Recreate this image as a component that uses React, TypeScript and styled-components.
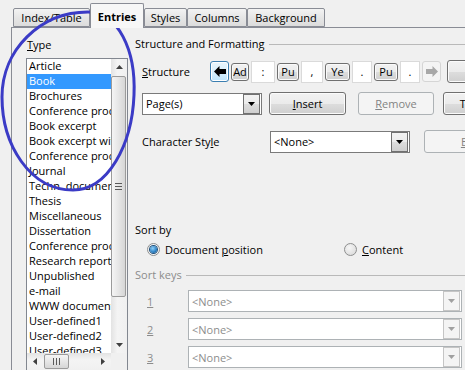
import styled, { createGlobalStyle } from 'styled-components'

const GlobalStyle = createGlobalStyle`
  body {
    margin: 0;
    background: #f0f0f0;
    font-family: "Open Sans", "Liberation Sans", Arial, sans-serif;
    font-size: 11px;
    color: #000;
  }
`

const Window = styled.div`
  position: relative;
  width: 465px;
  height: 370px;
  overflow: hidden;
  background: #f0f0f0;
  line-height: 15px;
`

const TabStrip = styled.div`
  display: flex;
  align-items: flex-end;
  height: 27px;
  padding-left: 13px;
  box-sizing: border-box;
`

const Tab = styled.div<{ $w: number; $active?: boolean }>`
  position: relative;
  z-index: ${p => (p.$active ? 1 : 0)};
  width: ${p => p.$w}px;
  height: ${p => (p.$active ? 25 : 19)}px;
  margin-bottom: ${p => (p.$active ? -1 : 0)}px;
  box-sizing: border-box;
  border: 1px solid #898c95;
  border-bottom: ${p => (p.$active ? 'none' : '1px solid #898c95')};
  border-radius: 2px 2px 0 0;
  background: ${p =>
    p.$active ? '#f7f7f7' : 'linear-gradient(#f3f3f3, #e6e6e6 50%, #dcdcdc)'};
  font-weight: ${p => (p.$active ? 700 : 400)};
  display: flex;
  align-items: center;
  justify-content: center;
  padding-top: ${p => (p.$active ? 1 : 0)}px;
`

const TabPage = styled.div`
  display: flex;
  margin-left: 11px;
  height: 343px;
  border-left: 1px solid #898c95;
  border-top: 1px solid #898c95;
`

const LeftPane = styled.div`
  width: 123px;
  flex-shrink: 0;
  padding-left: 14px;
  box-sizing: border-box;
  display: flex;
  flex-direction: column;
`

const Label = styled.div<{ $muted?: boolean }>`
  color: ${p => (p.$muted ? '#8c8c8c' : '#000')};
  white-space: nowrap;
`

const TypeLabel = styled(Label)`
  margin: 9px 0 6px 1px;
`

const Key = styled.span`
  text-decoration: underline;
`

const ListBox = styled.div`
  width: 102px;
  height: 314px;
  box-sizing: border-box;
  border: 1px solid #828790;
  background: #fff;
  display: grid;
  grid-template-columns: 84px 16px;
  grid-template-rows: 294px 17px;
  overflow: hidden;
`

const Items = styled.div`
  overflow: hidden;
`

const Item = styled.div<{ $selected?: boolean }>`
  height: 15px;
  line-height: 13px;
  padding-left: 2px;
  white-space: nowrap;
  background: ${p => (p.$selected ? '#3399ff' : 'transparent')};
  color: ${p => (p.$selected ? '#fff' : '#000')};
`

const VScroll = styled.div`
  display: flex;
  flex-direction: column;
  background: linear-gradient(90deg, #e3e3e3, #f4f4f4 40%, #f0f0f0);
`

const HScroll = styled.div`
  display: flex;
  align-items: center;
  background: linear-gradient(#e3e3e3, #f4f4f4 40%, #f0f0f0);
`

const ScrollArrow = styled.div<{ $size: number }>`
  flex-shrink: 0;
  width: ${p => p.$size}px;
  height: ${p => p.$size}px;
  display: flex;
  align-items: center;
  justify-content: center;
`

const VThumb = styled.div`
  margin: 1px 0 0 0;
  height: 221px;
  width: 15px;
  box-sizing: border-box;
  border: 1px solid #9b9b9b;
  border-radius: 2px;
  background: linear-gradient(90deg, #f5f5f5, #e6e6e6 50%, #d6d6d6);
  display: flex;
  align-items: center;
  justify-content: center;
`

const HThumb = styled.div`
  margin-left: 1px;
  width: 25px;
  height: 15px;
  box-sizing: border-box;
  border: 1px solid #9b9b9b;
  border-radius: 2px;
  background: linear-gradient(#f5f5f5, #e6e6e6 50%, #d6d6d6);
  display: flex;
  align-items: center;
  justify-content: center;
`

const Track = styled.div`
  flex: 1;
`

const Corner = styled.div`
  background: #f0f0f0;
`

const RightPane = styled.div`
  width: 340px;
  flex-shrink: 0;
  display: flex;
  flex-direction: column;
`

const Section = styled.div<{ $top: number; $muted?: boolean }>`
  display: flex;
  align-items: center;
  gap: 4px;
  margin-top: ${p => p.$top}px;
  color: ${p => (p.$muted ? '#8c8c8c' : '#000')};
  white-space: nowrap;
`

const Rule = styled.div`
  flex: 1;
  height: 1px;
  background: #b9b9b9;
  margin-top: 1px;
`

const Row = styled.div<{ $top: number; $indent: number }>`
  display: flex;
  align-items: center;
  margin-top: ${p => p.$top}px;
  padding-left: ${p => p.$indent}px;
  white-space: nowrap;
`

const RowLabel = styled.div<{ $w: number; $muted?: boolean }>`
  width: ${p => p.$w}px;
  flex-shrink: 0;
  color: ${p => (p.$muted ? '#8c8c8c' : '#000')};
`

const Strip = styled.div`
  display: flex;
  align-items: center;
  gap: 2px;
  height: 22px;
`

const NavButton = styled.div<{ $focused?: boolean }>`
  width: 19px;
  height: 21px;
  box-sizing: border-box;
  border: 1px solid ${p => (p.$focused ? '#3c7fb1' : '#d5d5d5')};
  border-radius: 3px;
  background: ${p => (p.$focused ? 'linear-gradient(#eaf6fd, #d9f0fc 50%, #bee6fd)' : '#f4f4f4')};
  box-shadow: ${p => (p.$focused ? 'inset 0 0 0 1px #ffffff' : 'none')};
  display: flex;
  align-items: center;
  justify-content: center;
`

const Token = styled.div<{ $w: number }>`
  width: ${p => p.$w}px;
  height: 18px;
  box-sizing: border-box;
  border: 1px solid #707070;
  border-radius: 3px;
  box-shadow: inset 0 0 0 1px #fafafa;
  background: linear-gradient(#f2f2f2, #ebebeb 50%, #dddddd 51%, #cfcfcf);
  display: flex;
  align-items: center;
  justify-content: center;
`

const TextCell = styled.div<{ $w: number }>`
  width: ${p => p.$w}px;
  height: 22px;
  box-sizing: border-box;
  border: 1px solid #dadada;
  background: #fff;
  display: flex;
  align-items: center;
  justify-content: center;
`

const Button = styled.div<{ $w: number; $left: number; $disabled?: boolean }>`
  width: ${p => p.$w}px;
  height: 23px;
  margin-left: ${p => p.$left}px;
  flex-shrink: 0;
  box-sizing: border-box;
  border: 1px solid ${p => (p.$disabled ? '#adb2b5' : '#707070')};
  border-radius: 3px;
  box-shadow: inset 0 0 0 1px ${p => (p.$disabled ? '#f4f4f4' : '#fbfbfb')};
  background: ${p =>
    p.$disabled ? '#f4f4f4' : 'linear-gradient(#f2f2f2, #ebebeb 50%, #dddddd 51%, #cfcfcf)'};
  color: ${p => (p.$disabled ? '#838383' : '#000')};
  display: flex;
  align-items: center;
  justify-content: center;
`

const Combo = styled.div<{ $w: number; $disabled?: boolean }>`
  width: ${p => p.$w}px;
  height: 22px;
  flex-shrink: 0;
  box-sizing: border-box;
  border: 1px solid ${p => (p.$disabled ? '#adb2b5' : '#7a7a7a')};
  background: #fff;
  display: flex;
  align-items: stretch;
  color: ${p => (p.$disabled ? '#8d8d8d' : '#000')};
`

const ComboText = styled.div`
  flex: 1;
  padding-left: 3px;
  display: flex;
  align-items: center;
`

const ComboButton = styled.div<{ $disabled?: boolean }>`
  width: 17px;
  margin: 0 1px 0 0;
  box-sizing: border-box;
  border: 1px solid ${p => (p.$disabled ? '#c5c5c5' : '#707070')};
  background: ${p => (p.$disabled ? '#f4f4f4' : 'linear-gradient(#f2f2f2, #ebebeb 50%, #dddddd 51%, #cfcfcf)')};
  display: flex;
  align-items: center;
  justify-content: center;
`

const RadioOption = styled.div<{ $w: number }>`
  width: ${p => p.$w}px;
  display: flex;
  align-items: center;
  gap: 5px;
`

const RadioDot = styled.div<{ $checked?: boolean }>`
  width: 13px;
  height: 13px;
  box-sizing: border-box;
  border-radius: 50%;
  border: 1px solid #8e8f8f;
  background: ${p => (p.$checked ? '#f4f4f4' : 'radial-gradient(circle at 40% 35%, #f6f6f6, #d6d6d6)')};
  display: flex;
  align-items: center;
  justify-content: center;
  &::after {
    content: '';
    display: ${p => (p.$checked ? 'block' : 'none')};
    width: 7px;
    height: 7px;
    border-radius: 50%;
    background: radial-gradient(circle at 40% 35%, #8fd0f8, #2a7fc3 60%, #134a7a);
    box-shadow: 0 0 0 1px #1f4f7a;
  }
`

const Annotation = styled.svg`
  position: absolute;
  left: 0;
  top: 0;
  pointer-events: none;
`

const Tri = ({ dir, color = '#404040' }: { dir: 'up' | 'down' | 'left' | 'right'; color?: string }) => {
  const d = {
    up: 'M0 4 L3.5 0 L7 4 Z',
    down: 'M0 0 L7 0 L3.5 4 Z',
    left: 'M4 0 L4 7 L0 3.5 Z',
    right: 'M0 0 L4 3.5 L0 7 Z',
  }[dir]
  const vertical = dir === 'up' || dir === 'down'
  return (
    <svg width={vertical ? 7 : 4} height={vertical ? 4 : 7} viewBox={vertical ? '0 0 7 4' : '0 0 4 7'}>
      <path d={d} fill={color} />
    </svg>
  )
}

const BigArrow = ({ right, color }: { right?: boolean; color: string }) => (
  <svg width="12" height="11" viewBox="0 0 12 11">
    <path
      d="M0 5.5 L5.5 0 L5.5 3 L12 3 L12 8 L5.5 8 L5.5 11 Z"
      fill={color}
      transform={right ? 'translate(12 0) scale(-1 1)' : undefined}
    />
  </svg>
)

const Grip = ({ vertical }: { vertical?: boolean }) => (
  <svg width="7" height="7" viewBox="0 0 7 7">
    {[0, 3, 6].map(o =>
      vertical ? (
        <rect key={o} x="0" y={o} width="7" height="1" fill="#5a5a5a" />
      ) : (
        <rect key={o} x={o} y="0" width="1" height="7" fill="#5a5a5a" />
      ),
    )}
  </svg>
)

const types = [
  'Article',
  'Book',
  'Brochures',
  'Conference proceedings',
  'Book excerpt',
  'Book excerpt with title',
  'Conference proceedings',
  'Journal',
  'Techn. documentation',
  'Thesis',
  'Miscellaneous',
  'Dissertation',
  'Conference proceedings',
  'Research report',
  'Unpublished',
  'e-mail',
  'WWW document',
  'User-defined1',
  'User-defined2',
  'User-defined3',
  'User-defined4',
]

const tabs = [
  { label: 'Index/Table', w: 77 },
  { label: 'Entries', w: 54, active: true },
  { label: 'Styles', w: 43 },
  { label: 'Columns', w: 60 },
  { label: 'Background', w: 78 },
]

export default function App() {
  return (
    <Window>
      <GlobalStyle />
      <TabStrip>
        {tabs.map(t => (
          <Tab key={t.label} $w={t.w} $active={t.active}>
            {t.label}
          </Tab>
        ))}
      </TabStrip>
      <TabPage>
        <LeftPane>
          <TypeLabel>
            <Key>T</Key>ype
          </TypeLabel>
          <ListBox>
            <Items>
              {types.map((t, i) => (
                <Item key={i} $selected={i === 1}>
                  {t}
                </Item>
              ))}
            </Items>
            <VScroll>
              <ScrollArrow $size={16}>
                <Tri dir="up" />
              </ScrollArrow>
              <VThumb>
                <Grip vertical />
              </VThumb>
              <Track />
              <ScrollArrow $size={16}>
                <Tri dir="down" />
              </ScrollArrow>
            </VScroll>
            <HScroll>
              <ScrollArrow $size={16}>
                <Tri dir="left" />
              </ScrollArrow>
              <HThumb>
                <Grip />
              </HThumb>
              <Track />
              <ScrollArrow $size={16}>
                <Tri dir="right" />
              </ScrollArrow>
            </HScroll>
            <Corner />
          </ListBox>
        </LeftPane>

        <RightPane>
          <Section $top={8}>
            Structure and Formatting
            <Rule />
          </Section>

          <Row $top={9} $indent={7}>
            <RowLabel $w={68}>
              <Key>S</Key>tructure
            </RowLabel>
            <Strip>
              <NavButton $focused>
                <BigArrow color="#000" />
              </NavButton>
              <Token $w={18}>Ad</Token>
              <TextCell $w={24}>:</TextCell>
              <Token $w={22}>Pu</Token>
              <TextCell $w={22}>,</TextCell>
              <Token $w={25}>Ye</Token>
              <TextCell $w={20}>.</TextCell>
              <Token $w={24}>Pu</Token>
              <TextCell $w={20}>.</TextCell>
              <NavButton>
                <BigArrow right color="#a8a8a8" />
              </NavButton>
            </Strip>
            <Button $w={90} $left={6}>
              All
            </Button>
          </Row>

          <Row $top={9} $indent={7}>
            <Combo $w={120}>
              <ComboText>Page(s)</ComboText>
              <ComboButton>
                <Tri dir="down" color="#000" />
              </ComboButton>
            </Combo>
            <Button $w={77} $left={7}>
              <span>
                <Key>I</Key>nsert
              </span>
            </Button>
            <Button $w={76} $left={12} $disabled>
              <span>
                <Key>R</Key>emove
              </span>
            </Button>
            <Button $w={78} $left={9}>
              Tab stop
            </Button>
          </Row>

          <Row $top={15} $indent={7}>
            <RowLabel $w={128}>
              Character Sty<Key>l</Key>e
            </RowLabel>
            <Combo $w={140}>
              <ComboText>&lt;None&gt;</ComboText>
              <ComboButton>
                <Tri dir="down" color="#000" />
              </ComboButton>
            </Combo>
            <Button $w={102} $left={14} $disabled>
              <span>
                <Key>E</Key>dit...
              </span>
            </Button>
          </Row>

          <Section $top={69}>Sort by</Section>

          <Row $top={5} $indent={12}>
            <RadioOption $w={197}>
              <RadioDot $checked />
              <span>
                Document <Key>p</Key>osition
              </span>
            </RadioOption>
            <RadioOption $w={120}>
              <RadioDot />
              <span>
                <Key>C</Key>ontent
              </span>
            </RadioOption>
          </Row>

          <Section $top={10} $muted>
            Sort keys
            <Rule />
          </Section>

          {['1', '2', '3'].map((n, i) => (
            <Row key={n} $top={i === 0 ? 8 : 6} $indent={12}>
              <RowLabel $w={41} $muted>
                <Key>{n}</Key>
              </RowLabel>
              <Combo $w={274} $disabled>
                <ComboText>&lt;None&gt;</ComboText>
                <ComboButton $disabled>
                  <Tri dir="down" color="#a0a0a0" />
                </ComboButton>
              </Combo>
            </Row>
          ))}
        </RightPane>
      </TabPage>

      <Annotation width="465" height="370" viewBox="0 0 465 370">
        <path
          d="M88 12 C118 12, 136 50, 134 95 C132 145, 108 190, 73 190 C30 190, 2 145, 2 97 C2 50, 40 12, 88 12 Z"
          fill="none"
          stroke="#3b3bc6"
          strokeWidth="3"
        />
      </Annotation>
    </Window>
  )
}
